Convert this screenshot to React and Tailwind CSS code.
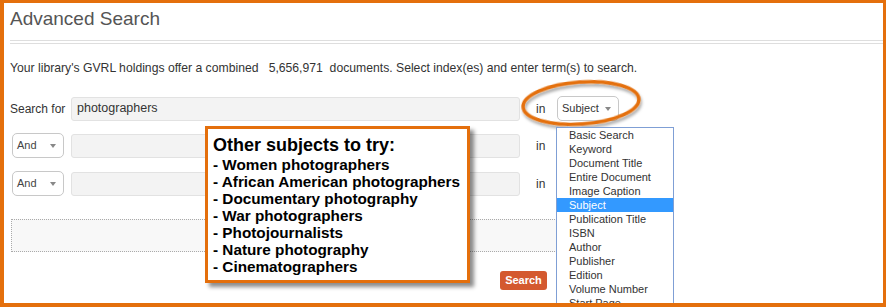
import React from "react";

const Caret = () => (
  <span className="w-0 h-0 border-l-[3px] border-r-[3px] border-t-[4px] border-l-transparent border-r-transparent border-t-[#888]" />
);

const AndSelect = () => (
  <div className="ml-[2px] w-[52px] h-[25px] border border-[#c8c8c8] rounded-[5px] bg-white flex items-center justify-between pl-[4px] pr-[7px] text-[11px] text-[#444]">
    <span>And</span>
    <Caret />
  </div>
);

const TermInput = ({ value, ml }) => (
  <div className={`${ml} w-[449px] h-[24px] bg-[#f3f3f3] border border-[#e2e2e2] rounded-[3px] pl-[5px] flex items-center text-[12.5px] text-[#333]`}>
    {value}
  </div>
);

const items = [
  "Basic Search",
  "Keyword",
  "Document Title",
  "Entire Document",
  "Image Caption",
  "Subject",
  "Publication Title",
  "ISBN",
  "Author",
  "Publisher",
  "Edition",
  "Volume Number",
  "Start Page",
];

const tips = [
  "- Women photographers",
  "- African American photographers",
  "- Documentary photography",
  "- War photographers",
  "- Photojournalists",
  "- Nature photography",
  "- Cinematographers",
];

export default function App() {
  return (
    <div className="relative w-[886px] h-[307px] overflow-hidden bg-white border-[#e46f0c] border-l-4 border-t-[3px] border-r-[3px] border-b-4 font-['Liberation_Sans',Arial,sans-serif]">
      <div className="pl-[6px] pt-[5px]">
        <div className="text-[19px] leading-[22px] text-[#555]">Advanced Search</div>
        <div className="mt-[10px] h-px bg-[#dedede]" />
        <div className="mt-[2px] h-px bg-[#dedede]" />
        <div className="mt-[16px] text-[12.2px] leading-[16px] text-[#333] whitespace-pre">
          {"Your library's GVRL holdings offer a combined   5,656,971  documents. Select index(es) and enter term(s) to search."}
        </div>

        <div className="mt-[20px] flex items-center h-[25px]">
          <div className="w-[61px] text-[12px] text-[#333]">Search for</div>
          <TermInput value="photographers" ml="" />
          <div className="ml-[16px] w-[21px] text-[12px] text-[#333]">in</div>
          <div className="w-[62px] h-[25px] border border-[#c8c8c8] rounded-[5px] bg-white flex items-center justify-between pl-[4px] pr-[7px] text-[11px] text-[#333]">
            <span>Subject</span>
            <Caret />
          </div>
        </div>

        <div className="mt-[12px] flex items-center h-[25px]">
          <AndSelect />
          <TermInput value="" ml="ml-[7px]" />
          <div className="ml-[16px] w-[21px] text-[12px] text-[#333]">in</div>
        </div>

        <div className="mt-[13px] flex items-center h-[25px]">
          <AndSelect />
          <TermInput value="" ml="ml-[7px]" />
          <div className="ml-[16px] w-[21px] text-[12px] text-[#333]">in</div>
        </div>

        <div className="mt-[23px] ml-[1px] w-[640px] h-[33px] border border-dotted border-[#aaa] bg-[#f8f8f8]" />

        <div className="mt-[19px] ml-[490px] w-[47px] h-[19px] bg-[#d4592f] rounded-[3px] flex items-center justify-center text-white text-[11px] font-bold">
          Search
        </div>
      </div>

      {/* highlight ellipse */}
      <svg
        className="absolute left-[506px] top-[72px]"
        width="140"
        height="62"
        viewBox="0 0 140 62"
      >
        <defs>
          <filter id="sh" x="-20%" y="-20%" width="140%" height="160%">
            <feDropShadow dx="1" dy="3" stdDeviation="1.5" floodColor="#000" floodOpacity="0.35" />
          </filter>
        </defs>
        <ellipse
          cx="71"
          cy="28"
          rx="58"
          ry="21"
          fill="none"
          stroke="#e46f0c"
          strokeWidth="3.5"
          transform="rotate(-4 71 28)"
          filter="url(#sh)"
        />
      </svg>

      {/* dropdown list */}
      <div className="absolute left-[552px] top-[124px] w-[118px] h-[200px] bg-white border border-[#7f9fd5]">
        {items.map((it) =>
          it === "Subject" ? (
            <div key={it} className="h-[14px] leading-[14px] pl-[12px] text-[11px] bg-[#3399ff] text-white">
              {it}
            </div>
          ) : (
            <div key={it} className="h-[14px] leading-[14px] pl-[12px] text-[11px] text-[#333]">
              {it}
            </div>
          )
        )}
      </div>

      {/* callout */}
      <div className="absolute left-[201px] top-[123px] w-[265px] h-[157px] bg-white border-[3px] border-[#e46f0c] shadow-[4px_4px_4px_rgba(0,0,0,0.45)] pl-[5px] pt-[7px] text-black">
        <div className="text-[18px] leading-[18px] font-bold">Other subjects to try:</div>
        <div className="mt-[2px]">
          {tips.map((t) => (
            <div key={t} className="text-[15.3px] leading-[17px] font-bold">
              {t}
            </div>
          ))}
        </div>
      </div>
    </div>
  );
}
